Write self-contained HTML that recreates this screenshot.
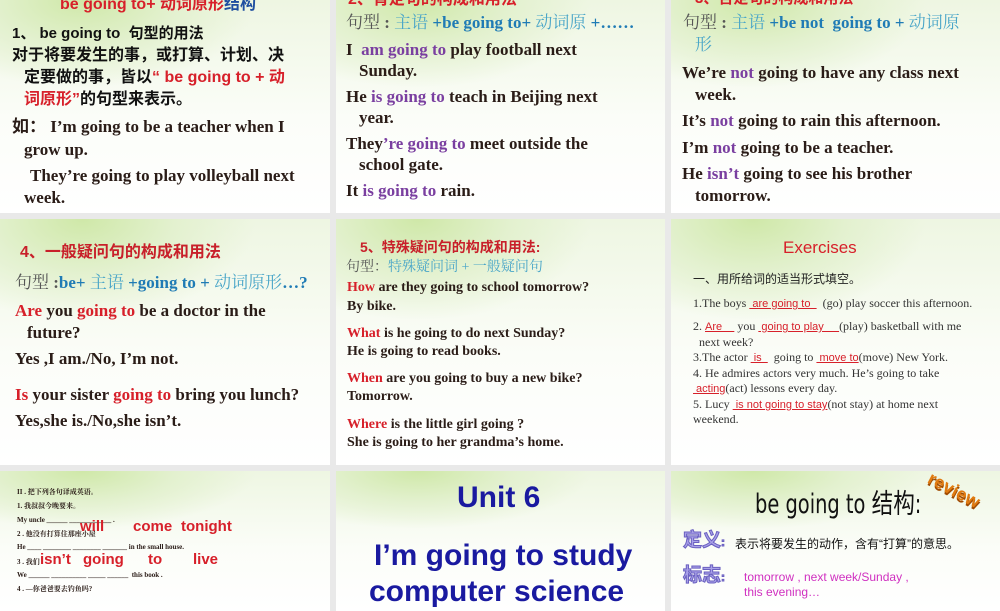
<!DOCTYPE html>
<html><head><meta charset="utf-8"><style>
body{margin:0;width:1000px;height:600px;background:#e9e9e9;overflow:hidden;position:relative;font-family:"Liberation Serif","Noto Serif CJK SC",serif}
.s{position:absolute;overflow:hidden;background:radial-gradient(ellipse 70% 55% at 25% 0%,#cfe8a8 0%,#e3f1cf 40%,rgba(255,255,255,0) 75%),linear-gradient(180deg,#eef6e2 0%,#fbfdf8 55%,#fff 100%)}
.l{position:absolute;white-space:nowrap;line-height:1}
.b{font-weight:bold;color:#2a1c17}
.sans{font-family:"Liberation Sans","Noto Sans CJK SC",sans-serif}
.cj{font-family:"Liberation Sans","Noto Sans CJK SC",sans-serif}
.p{color:#7a3fa0}.r{color:#d7202a}.bl{color:#1f7bb5}.lb{color:#4aa6c8}
</style></head><body>
<!-- row 1 -->
<div class="s" style="left:0;top:0;width:330px;height:213px">
<div class="l sans b" style="left:60px;top:-3px;font-size:16px;color:#d7202a">be going to+ 动词原形<span style="color:#1f4fa0">结构</span></div>
<div class="l sans b" style="left:12px;top:26px;font-size:15px;color:#111">1、 be going to &nbsp;句型的用法</div>
<div class="l cj b" style="left:12px;top:48px;font-size:16px;color:#111">对于将要发生的事，或打算、计划、决</div>
<div class="l cj b" style="left:24px;top:70px;font-size:16px;color:#111">定要做的事，皆以<span class="r">“ be going to + 动</span></div>
<div class="l cj b" style="left:24px;top:92px;font-size:16px;color:#111"><span class="r">词原形”</span>的句型来表示。</div>
<div class="l b" style="left:12px;top:118px;font-size:17px"><span class="cj">如：</span> I’m going to be a teacher when I</div>
<div class="l b" style="left:24px;top:141px;font-size:17px">grow up.</div>
<div class="l b" style="left:30px;top:167px;font-size:17px">They’re going to play volleyball next</div>
<div class="l b" style="left:24px;top:189px;font-size:17px">week.</div>
</div>
<div class="s" style="left:336px;top:0;width:329px;height:213px">
<div class="l sans b" style="left:12px;top:-8px;font-size:16px;color:#d7202a">2、肯定句的构成和用法</div>
<div class="l" style="left:10px;top:14px;font-size:17px;color:#555">句型 <b>:</b> <span class="lb">主语</span> <b class="bl">+be going to+</b> <span class="lb">动词原</span> <b class="bl">+……</b></div>
<div class="l b" style="left:10px;top:41px;font-size:17px">I &nbsp;<span class="p">am going to</span> play football next</div>
<div class="l b" style="left:23px;top:62px;font-size:17px">Sunday.</div>
<div class="l b" style="left:10px;top:88px;font-size:17px">He <span class="p">is going to</span> teach in Beijing next</div>
<div class="l b" style="left:23px;top:109px;font-size:17px">year.</div>
<div class="l b" style="left:10px;top:135px;font-size:17px">They<span class="p">’re going to</span> meet outside the</div>
<div class="l b" style="left:23px;top:156px;font-size:17px">school gate.</div>
<div class="l b" style="left:10px;top:182px;font-size:17px">It <span class="p">is going to</span> rain.</div>
</div>
<div class="s" style="left:671px;top:0;width:329px;height:213px">
<div class="l sans b" style="left:24px;top:-9px;font-size:15px;color:#d7202a">3、否定句的构成和用法</div>
<div class="l" style="left:12px;top:14px;font-size:17px;color:#555">句型 <b>:</b> <span class="lb">主语</span> <b class="bl">+be not &nbsp;going to +</b> <span class="lb">动词原</span></div>
<div class="l lb" style="left:24px;top:36px;font-size:17px">形</div>
<div class="l b" style="left:11px;top:64px;font-size:17px">We’re <span class="p">not</span> going to have any class next</div>
<div class="l b" style="left:24px;top:86px;font-size:17px">week.</div>
<div class="l b" style="left:11px;top:112px;font-size:17px">It’s <span class="p">not</span> going to rain this afternoon.</div>
<div class="l b" style="left:11px;top:139px;font-size:17px">I’m <span class="p">not</span> going to be a teacher.</div>
<div class="l b" style="left:11px;top:165px;font-size:17px">He <span class="p">isn’t</span> going to see his brother</div>
<div class="l b" style="left:24px;top:187px;font-size:17px">tomorrow.</div>
</div>
<!-- row 2 -->
<div class="s" style="left:0;top:219px;width:330px;height:246px">
<div class="l sans b" style="left:20px;top:26px;font-size:16px;color:#c8202a">4、一般疑问句的构成和用法</div>
<div class="l" style="left:15px;top:55px;font-size:17px;color:#555">句型 <b>:</b><b class="bl">be+</b> <span class="lb">主语</span> <b class="bl">+going to +</b> <span class="lb">动词原形</span><b class="bl">…?</b></div>
<div class="l b" style="left:15px;top:83px;font-size:17px"><span class="r">Are</span> you <span class="r">going to</span> be a doctor in the</div>
<div class="l b" style="left:27px;top:105px;font-size:17px">future?</div>
<div class="l b" style="left:15px;top:131px;font-size:17px">Yes ,I am./No, I’m not.</div>
<div class="l b" style="left:15px;top:167px;font-size:17px"><span class="r">Is</span> your sister <span class="r">going to</span> bring you lunch?</div>
<div class="l b" style="left:15px;top:193px;font-size:17px">Yes,she is./No,she isn’t.</div>
</div>
<div class="s" style="left:336px;top:219px;width:329px;height:246px">
<div class="l sans b" style="left:24px;top:21px;font-size:14px;color:#c8202a">5、特殊疑问句的构成和用法:</div>
<div class="l" style="left:10px;top:42px;font-size:14px;color:#555">句型：<span class="lb">特殊疑问词 + 一般疑问句</span></div>
<div class="l b" style="left:11px;top:62px;font-size:14px"><span class="r">How</span> are they going to school tomorrow?</div>
<div class="l b" style="left:11px;top:81px;font-size:14px">By bike.</div>
<div class="l b" style="left:11px;top:108px;font-size:14px"><span class="r">What</span> is he going to do next Sunday?</div>
<div class="l b" style="left:11px;top:126px;font-size:14px">He is going to read books.</div>
<div class="l b" style="left:11px;top:153px;font-size:14px"><span class="r">When</span> are you going to buy a new bike?</div>
<div class="l b" style="left:11px;top:171px;font-size:14px">Tomorrow.</div>
<div class="l b" style="left:11px;top:199px;font-size:14px"><span class="r">Where</span> is the little girl going ?</div>
<div class="l b" style="left:11px;top:217px;font-size:14px">She is going to her grandma’s home.</div>
</div>
<div class="s" style="left:671px;top:219px;width:329px;height:246px;font-size:12px;color:#333">
<div class="l sans" style="left:112px;top:20px;font-size:17px;color:#d7202a">Exercises</div>
<div class="l cj" style="left:22px;top:54px;font-size:12px;color:#222">一、用所给词的适当形式填空。</div>
<div class="l" style="left:22px;top:78px">1.The boys <u class="sans" style="color:#d7202a;font-size:11px">&nbsp;are going to&nbsp;&nbsp;</u> &nbsp;(go) play soccer this afternoon.</div>
<div class="l" style="left:22px;top:101px">2. <u class="sans" style="color:#d7202a;font-size:11px">Are&nbsp;&nbsp;&nbsp;&nbsp;</u> you <u class="sans" style="color:#d7202a;font-size:11px">&nbsp;going to play&nbsp;&nbsp;&nbsp;&nbsp;&nbsp;</u>(play) basketball with me</div>
<div class="l" style="left:28px;top:117px">next week?</div>
<div class="l" style="left:22px;top:132px">3.The actor <u class="sans" style="color:#d7202a;font-size:11px">&nbsp;is&nbsp;&nbsp;</u> &nbsp;going to <u class="sans" style="color:#d7202a;font-size:11px">&nbsp;move to</u>(move) New York.</div>
<div class="l" style="left:22px;top:148px">4. He admires actors very much. He’s going to take</div>
<div class="l" style="left:22px;top:163px"><u class="sans" style="color:#d7202a;font-size:11px">&nbsp;acting</u>(act) lessons every day.</div>
<div class="l" style="left:22px;top:179px">5. Lucy <u class="sans" style="color:#d7202a;font-size:11px">&nbsp;is not going to stay</u>(not stay) at home next</div>
<div class="l" style="left:22px;top:194px">weekend.</div>
</div>
<!-- row 3 -->
<div class="s" style="left:0;top:471px;width:330px;height:140px;font-size:7px;color:#444">
<div class="l b" style="left:17px;top:18px;font-size:7px">II . 把下列各句译成英语。</div>
<div class="l b" style="left:17px;top:32px">1. 我叔叔今晚要来。</div>
<div class="l b" style="left:17px;top:46px">My uncle ______ ____________ .</div>
<div class="l b" style="left:17px;top:60px">2 . 他没有打算住那座小屋</div>
<div class="l b" style="left:17px;top:73px">He ____ ________ ________ _______ in the small house.</div>
<div class="l b" style="left:17px;top:88px">3 . 我们</div>
<div class="l b" style="left:17px;top:101px">We ______ __________ _____ ______ &nbsp;this book .</div>
<div class="l b" style="left:17px;top:115px">4 . —你爸爸要去钓鱼吗?</div>
<div class="l sans b r" style="left:80px;top:48px;font-size:15px">will</div>
<div class="l sans b r" style="left:133px;top:48px;font-size:15px">come</div>
<div class="l sans b r" style="left:181px;top:48px;font-size:15px">tonight</div>
<div class="l sans b r" style="left:40px;top:81px;font-size:15px">isn’t</div>
<div class="l sans b r" style="left:83px;top:81px;font-size:15px">going</div>
<div class="l sans b r" style="left:148px;top:81px;font-size:15px">to</div>
<div class="l sans b r" style="left:193px;top:81px;font-size:15px">live</div>
</div>
<div class="s" style="left:336px;top:471px;width:329px;height:140px">
<div class="l sans" style="left:121px;top:12px;font-size:30px;font-weight:bold;color:#1a1aa0">Unit 6</div>
<div class="l sans" style="left:38px;top:70px;font-size:30px;font-weight:bold;color:#1a1aa0">I’m going to study</div>
<div class="l sans" style="left:33px;top:106px;font-size:30px;font-weight:bold;color:#1a1aa0">computer science</div>
</div>
<div class="s" style="left:671px;top:471px;width:329px;height:140px">
<div class="l" style="left:84px;top:20px;font-size:27px;color:#111;font-family:'DejaVu Sans Condensed','Liberation Sans Narrow','Noto Sans CJK SC',sans-serif;transform:scaleX(.8);transform-origin:left">be going to 结构:</div>
<div class="l sans b" style="left:255px;top:10px;font-size:18px;color:#e07a10;transform:rotate(28deg);text-shadow:1px 2px 0 #a04a00">review</div>
<div class="l cj b" style="left:12px;top:60px;font-size:19px;color:#a8a0e8;-webkit-text-stroke:1px #6a60c0">定义<span style="font-size:12px">:</span></div>
<div class="l cj" style="left:64px;top:67px;font-size:12px;color:#111">表示将要发生的动作，含有“打算”的意思。</div>
<div class="l cj b" style="left:12px;top:95px;font-size:19px;color:#a8a0e8;-webkit-text-stroke:1px #6a60c0">标志<span style="font-size:12px">:</span></div>
<div class="l sans" style="left:73px;top:100px;font-size:12px;color:#d030c0">tomorrow , next week/Sunday ,</div>
<div class="l sans" style="left:73px;top:115px;font-size:12px;color:#d030c0">this evening…</div>
</div>
</body></html>
